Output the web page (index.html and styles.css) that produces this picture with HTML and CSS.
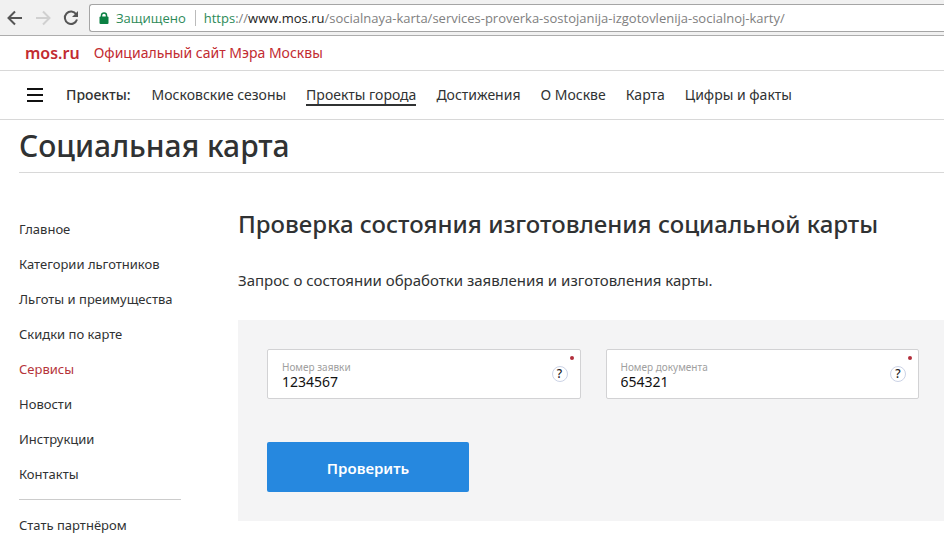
FILE: index.html
```html
<!DOCTYPE html>
<html lang="ru">
<head>
<meta charset="utf-8">
<meta name="viewport" content="width=device-width, initial-scale=1">
<title>Социальная карта</title>
<link rel="stylesheet" href="styles.css">
</head>
<body>
<div class="toolbar">
  <button class="tool tool-back" type="button" aria-label="Назад">
    <svg width="16" height="16" viewBox="0 0 16 16"><path d="M15 8H2M8 1.500L1.500 8L8 14.500"/></svg>
  </button>
  <button class="tool tool-forward" type="button" aria-label="Вперёд" disabled>
    <svg width="16" height="16" viewBox="0 0 16 16"><path d="M1 8H14M8 1.500L14.500 8L8 14.500"/></svg>
  </button>
  <button class="tool tool-reload" type="button" aria-label="Обновить">
    <svg width="16" height="16" viewBox="0 0 16 16"><path d="M13.200 4.200A6.200 6.200 0 1 0 14 9.500"/><path class="solid" d="M15 1V7H9Z"/></svg>
  </button>
  <div class="address">
    <svg class="lock" width="10" height="12" viewBox="0 0 10 12"><rect x="0.500" y="4.500" width="9" height="7.500" rx="1"/><path d="M2.500 5V3.300a2.500 2.300 0 0 1 5 0V5"/></svg>
    <span class="secure">Защищено</span>
    <span class="url"><span class="scheme">https</span>://<span class="host">www.mos.ru</span>/socialnaya-karta/services-proverka-sostojanija-izgotovlenija-socialnoj-karty/</span>
  </div>
</div>

<header>
  <div class="brand-bar">
    <a class="logo" href="#">mos.ru</a>
    <a class="tagline" href="#">Официальный сайт Мэра Москвы</a>
  </div>
  <nav class="main-nav">
    <button class="burger" type="button" aria-label="Меню"><span></span><span></span><span></span></button>
    <span class="nav-label">Проекты:</span>
    <div class="nav-links">
      <a href="#">Московские сезоны</a>
      <a class="active" href="#">Проекты города</a>
      <a href="#">Достижения</a>
      <a href="#">О Москве</a>
      <a href="#">Карта</a>
      <a href="#">Цифры и факты</a>
    </div>
  </nav>
</header>

<h1 class="page-title">Социальная карта</h1>

<div class="layout">
  <nav class="side-nav">
    <a href="#">Главное</a>
    <a href="#">Категории льготников</a>
    <a href="#">Льготы и преимущества</a>
    <a href="#">Скидки по карте</a>
    <a class="active" href="#">Сервисы</a>
    <a href="#">Новости</a>
    <a href="#">Инструкции</a>
    <a href="#">Контакты</a>
    <hr>
    <a href="#">Стать партнёром</a>
  </nav>
  <main>
    <h2>Проверка состояния изготовления социальной карты</h2>
    <p class="lead">Запрос о состоянии обработки заявления и изготовления карты.</p>
    <form class="panel">
      <div class="fields">
        <div class="field">
          <div class="field-text">
            <label for="request">Номер заявки</label>
            <input id="request" type="text" value="1234567" required>
          </div>
          <button class="help" type="button">?</button>
          <span class="required"></span>
        </div>
        <div class="field">
          <div class="field-text">
            <label for="document">Номер документа</label>
            <input id="document" type="text" value="654321" required>
          </div>
          <button class="help" type="button">?</button>
          <span class="required"></span>
        </div>
      </div>
      <button class="submit" type="submit">Проверить</button>
    </form>
  </main>
</div>
</body>
</html>
```
FILE: styles.css
```css
* {
  box-sizing: border-box;
}

body {
  margin: 0;
  background: #fff;
  color: #303233;
  font: 14px/20px "Noto Sans", "Open Sans", sans-serif;
}

a {
  color: inherit;
  text-decoration: none;
}

button,
input {
  margin: 0;
  padding: 0;
  border: 0;
  background: none;
  font: inherit;
}

/* Browser toolbar */
.toolbar {
  display: flex;
  align-items: center;
  gap: 12px;
  height: 36px;
  padding-left: 7px;
  border-bottom: 1px solid #adadad;
  background: #f1f1f1;
}

.tool {
  display: flex;
  color: #555;
}

.tool-forward {
  color: #d0d0d0;
}

.tool path {
  fill: none;
  stroke: currentColor;
  stroke-width: 2;
}

.tool .solid {
  fill: currentColor;
  stroke: none;
}

.address {
  display: flex;
  flex: 1;
  align-items: center;
  height: 28px;
  min-width: 0;
  margin-left: -2px;
  padding-left: 9px;
  border: 1px solid #a5a5a5;
  border-right: 0;
  border-radius: 3px 0 0 3px;
  background: #fff;
  font-family: "Open Sans", "Noto Sans", sans-serif;
  font-size: 13px;
  white-space: nowrap;
}

.lock {
  fill: #0b8043;
}

.lock path {
  fill: none;
  stroke: #0b8043;
  stroke-width: 1.5;
}

.secure {
  margin: 0 8px 0 7px;
  padding-right: 9px;
  border-right: 1px solid #bbb;
  color: #2c8a58;
  line-height: 16px;
}

.url {
  overflow: hidden;
  color: #808080;
}

.scheme {
  color: #2c8a58;
}

.host {
  color: #222;
}

/* Site header */
.brand-bar {
  display: flex;
  align-items: center;
  gap: 14px;
  height: 35px;
  padding-left: 25px;
  border-bottom: 1px solid #d8d8d8;
  color: #c22b31;
}

.logo {
  font-size: 16px;
  font-weight: 600;
}

.main-nav {
  display: flex;
  align-items: center;
  height: 49px;
  padding-left: 27px;
  border-bottom: 1px solid #d8d8d8;
}

.burger {
  display: grid;
  gap: 4px;
  width: 16px;
  margin-right: 23px;
}

.burger span {
  height: 2px;
  background: #111;
}

.nav-label {
  margin-right: 21px;
  font-weight: 500;
}

.nav-links {
  display: flex;
  gap: 20px;
  white-space: nowrap;
}

.nav-links .active {
  box-shadow: 0 2px #303233;
  height: 19px;
}

.page-title {
  height: 53px;
  margin: 0 0 0 19px;
  border-bottom: 1px solid #d8d8d8;
  font-size: 30px;
  font-weight: 500;
  line-height: 52px;
}

/* Content */
.layout {
  display: grid;
  grid-template-columns: 162px 1fr;
  gap: 57px;
  padding-left: 19px;
}

.side-nav {
  display: flex;
  flex-direction: column;
  gap: 15px;
  padding-top: 46px;
  font-size: 13px;
  white-space: nowrap;
}

.side-nav .active {
  color: #b5343a;
}

.side-nav hr {
  width: 100%;
  margin: 0;
  border: 0;
  border-top: 1px solid #ccc;
}

h2 {
  margin: 0;
  padding-top: 35px;
  font-size: 24px;
  font-weight: 500;
  line-height: 32px;
}

.lead {
  margin: 29px 0;
  font-size: 15px;
  line-height: 22px;
}

.panel {
  padding: 29px 25px 29px 29px;
  background: #f4f4f5;
}

.fields {
  display: grid;
  grid-template-columns: 1fr 1fr;
  gap: 25px;
  margin-bottom: 43px;
}

.field {
  position: relative;
  display: flex;
  align-items: center;
  height: 50px;
  padding: 0 12px 0 14px;
  border: 1px solid #d2d2d4;
  border-radius: 2px;
  background: #fff;
}

.field-text {
  display: grid;
  flex: 1;
  padding-top: 2px;
}

.field label {
  color: #a0a0a0;
  font-size: 10px;
  line-height: 14px;
}

.field input {
  width: 100%;
  outline: 0;
  color: #111;
  line-height: 16px;
}

.help {
  width: 16px;
  height: 16px;
  border: 1px solid #ccd3e6;
  border-radius: 50%;
  color: #222;
  font-size: 12px;
  font-weight: 500;
  line-height: 14px;
}

.required {
  position: absolute;
  top: 6px;
  right: 6px;
  width: 4px;
  height: 4px;
  border-radius: 50%;
  background: #b22f3b;
}

.submit {
  width: 202px;
  height: 50px;
  padding-top: 2px;
  border-radius: 2px;
  background: #2688df;
  color: #fff;
  font-size: 15px;
  font-weight: 600;
}
```
